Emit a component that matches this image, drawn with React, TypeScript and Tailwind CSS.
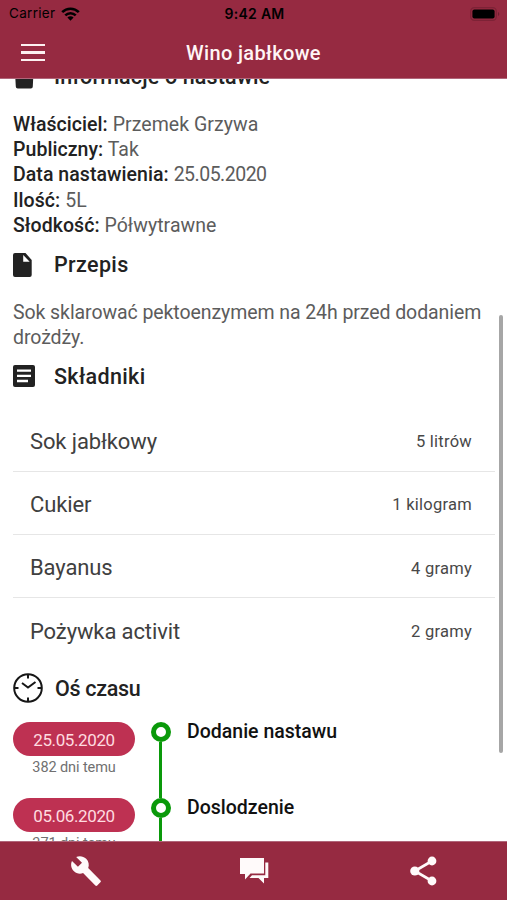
import type { ReactNode } from "react"
import { IoMdBuild } from "react-icons/io"

export default function App() {
  return (
    <div className="flex h-[900px] w-[507px] flex-col overflow-hidden bg-white font-['Roboto','Liberation_Sans',sans-serif] text-[#222]">
      {/* Status bar + header */}
      <header className="h-[79px] shrink-0 border-b border-[#b0667a] bg-[#962a41]">
        <div className="grid h-[27px] grid-cols-3 items-center pl-[9px] pr-[7px] font-['Inter',sans-serif] text-black">
          <div className="flex items-center gap-[6px] text-[13.5px] tracking-[0.3px]">
            Carrier
            <WifiIcon />
          </div>
          <div className="text-center text-[14px] font-semibold tracking-[0.3px]">9:42 AM</div>
          <div className="flex justify-end">
            <BatteryIcon />
          </div>
        </div>
        <div className="grid h-[51px] grid-cols-[60px_1fr_60px] items-center">
          <button className="flex flex-col gap-[5px] pl-[21px]" aria-label="Menu">
            <span className="h-[2.5px] w-[24px] bg-[#fdf0f0]" />
            <span className="h-[2.5px] w-[24px] bg-[#fdf0f0]" />
            <span className="h-[2.5px] w-[24px] bg-[#fdf0f0]" />
          </button>
          <h1 className="pt-[1px] text-center text-[20px] font-medium tracking-[0.35px] text-[#fff5f5]">Wino jabłkowe</h1>
        </div>
      </header>

      <div className="flex min-h-0 flex-1">
        <main className="w-[495px] overflow-hidden pl-[13px]">
          <SectionTitle className="-mt-[17px] h-[30px]" icon={<JarIcon />}>
            <span className="tracking-[0.15px]">Informacje o nastawie</span>
          </SectionTitle>

          <div className="mt-[20px] text-[19.5px] leading-[25.2px] tracking-[0.05px]">
            {details.map((item) => (
              <p key={item.label}>
                <span className="font-medium">{item.label}:</span>{" "}
                <span className={`text-[#5c5c5c] ${item.label === "Data nastawienia" ? "tracking-[-0.5px]" : ""}`}>
                  {item.value}
                </span>
              </p>
            ))}
          </div>

          <SectionTitle className="mt-[12px] h-[30px]" icon={<DocumentIcon />}>
            Przepis
          </SectionTitle>
          <p className="mt-[20px] whitespace-nowrap text-[19.5px] leading-[25.2px] tracking-[-0.08px] text-[#5c5c5c]">
            Sok sklarować pektoenzymem na 24h przed dodaniem
            <br />
            drożdży.
          </p>

          <SectionTitle className="mt-[11px] h-[30px]" icon={<ListIcon />}>
            Składniki
          </SectionTitle>
          <ul className="mt-[17px]">
            {ingredients.map((item) => (
              <li
                key={item.name}
                className="flex h-[63.2px] items-center justify-between border-b border-[#e6e6e6] pl-[17px] pr-[23px] pt-[4px] last:border-0"
              >
                <span className="text-[22px] tracking-[-0.12px] text-[#404040]">{item.name}</span>
                <span className="pt-[2px] text-[16.5px] tracking-[0.25px] text-[#484848]">{item.amount}</span>
              </li>
            ))}
          </ul>

          <SectionTitle className="mt-[12px] h-[30px]" icon={<ClockIcon />}>
            <span className="pl-[1px] tracking-[-0.3px]">Oś czasu</span>
          </SectionTitle>
          <div className="mt-[19px]">
            {timeline.map((event) => (
              <div key={event.date} className="flex h-[76px]">
                <div className="w-[122px] text-center">
                  <div className="flex h-[34px] items-center justify-center rounded-full bg-[#be3152] pt-[3px] text-[17px] tracking-[-0.4px] text-[#ffdce0]">
                    {event.date}
                  </div>
                  <div className="pt-[1px] text-[14.5px] leading-[22px] tracking-[-0.1px] text-[#707070]">{event.ago}</div>
                </div>
                <div className="ml-[15px] flex w-[21px] flex-col items-center">
                  <span className="h-[20px] w-[20px] shrink-0 rounded-full border-[5px] border-[#0a990a] bg-white" />
                  <span className="w-[3px] flex-1 bg-[#0a990a]" />
                </div>
                <div className="ml-[16px] text-[19.5px] font-medium leading-[20px] text-[#111]">{event.title}</div>
              </div>
            ))}
          </div>
        </main>
        {/* Scroll indicator */}
        <div className="ml-[4px] mt-[236px] h-[438px] w-[4px] rounded-full bg-[#a6a6a6]" />
      </div>

      {/* Bottom tabs */}
      <nav className="grid h-[59px] shrink-0 grid-cols-3 place-items-center border-t border-[#b0667a] bg-[#962a41] pl-[4px] text-[#fffafa]">
        <IoMdBuild size={34} className="mr-[3px]" />
        <ChatIcon />
        <ShareIcon />
      </nav>
    </div>
  )
}

function SectionTitle({ icon, className, children }: { icon: ReactNode; className: string; children: ReactNode }) {
  return (
    <div className={`flex items-center ${className}`}>
      <div className="flex w-[41px] items-center">{icon}</div>
      <h2 className="whitespace-nowrap pt-px text-[21.5px] font-medium tracking-[0.35px]">{children}</h2>
    </div>
  )
}

function WifiIcon() {
  return (
    <svg width="19" height="14" viewBox="0 0 19 14" fill="none" stroke="black" strokeWidth="2.6">
      <path d="M1.2 5.2a11.8 11.8 0 0 1 16.6 0" />
      <path d="M4.3 8.4a7.4 7.4 0 0 1 10.4 0" />
      <path d="M9.5 13.7 6.4 10.6a4.4 4.4 0 0 1 6.2 0Z" fill="black" stroke="none" />
    </svg>
  )
}

function BatteryIcon() {
  return (
    <svg width="30" height="14" viewBox="0 0 30 14">
      <rect x="0.7" y="0.7" width="25.6" height="12.6" rx="3.6" fill="none" stroke="#7d2236" strokeWidth="1.2" />
      <rect x="2.4" y="2.4" width="22.2" height="9.2" rx="2" fill="black" />
      <path d="M28 5v4a2.2 2.2 0 0 0 0-4Z" fill="#6e1f30" />
    </svg>
  )
}

function JarIcon() {
  return (
    <svg width="24" height="24" viewBox="0 0 24 24" fill="#222">
      <path d="M2 2h19v4H2zM2 7h18.500l-.7 14.500a2 2 0 0 1-2 2H4.800a2 2 0 0 1-2-2z" />
    </svg>
  )
}

function DocumentIcon() {
  return (
    <svg width="19" height="24" viewBox="0 0 19 24" fill="#222">
      <path d="M2 0h10.500l6.200 6.900V22a2 2 0 0 1-2 2H2a2 2 0 0 1-2-2V2a2 2 0 0 1 2-2Zm8.200 2v6.800h6.500Z" fillRule="evenodd" />
    </svg>
  )
}

function ListIcon() {
  return (
    <svg width="22" height="22" viewBox="0 0 22 22">
      <rect width="22" height="22" rx="2" fill="#222" />
      <path d="M4 5.700h14M4 10.800h14M4 16h11" stroke="white" strokeWidth="2.300" />
    </svg>
  )
}

function ClockIcon() {
  return (
    <svg width="30" height="30" viewBox="0 0 30 30" fill="none" stroke="#161616" strokeWidth="2" className="shrink-0">
      <circle cx="15" cy="15" r="13.800" />
      <path d="M15 1v4.500M15 24.500V29M1 15h4.500M24.500 15H29" />
      <path d="m9 10 6 4.500 7.500-5.500" />
    </svg>
  )
}

function ChatIcon() {
  return (
    <svg width="29" height="26" viewBox="0 0 29 26" fill="currentColor" className="mr-px">
      <path d="M0 0h24v15.500H10.500L5 21.500v-5.500H0Z" />
      <path d="M25.300 4.500H28.300v15.500H24v5.500L18.500 20H9.500l2.500-2.700h13.300Z" />
    </svg>
  )
}

function ShareIcon() {
  return (
    <svg width="27" height="30" viewBox="0 0 27 30" fill="currentColor" className="ml-[1px]">
      <path d="M22 5 4.800 15 22 25" fill="none" stroke="currentColor" strokeWidth="2.700" />
      <circle cx="22" cy="5" r="4.400" />
      <circle cx="4.800" cy="15" r="4.600" />
      <circle cx="22" cy="25" r="4.400" />
    </svg>
  )
}

const details = [
  { label: "Właściciel", value: "Przemek Grzywa" },
  { label: "Publiczny", value: "Tak" },
  { label: "Data nastawienia", value: "25.05.2020" },
  { label: "Ilość", value: "5L" },
  { label: "Słodkość", value: "Półwytrawne" },
]

const ingredients = [
  { name: "Sok jabłkowy", amount: "5 litrów" },
  { name: "Cukier", amount: "1 kilogram" },
  { name: "Bayanus", amount: "4 gramy" },
  { name: "Pożywka activit", amount: "2 gramy" },
]

const timeline = [
  { date: "25.05.2020", ago: "382 dni temu", title: "Dodanie nastawu" },
  { date: "05.06.2020", ago: "371 dni temu", title: "Doslodzenie" },
]
